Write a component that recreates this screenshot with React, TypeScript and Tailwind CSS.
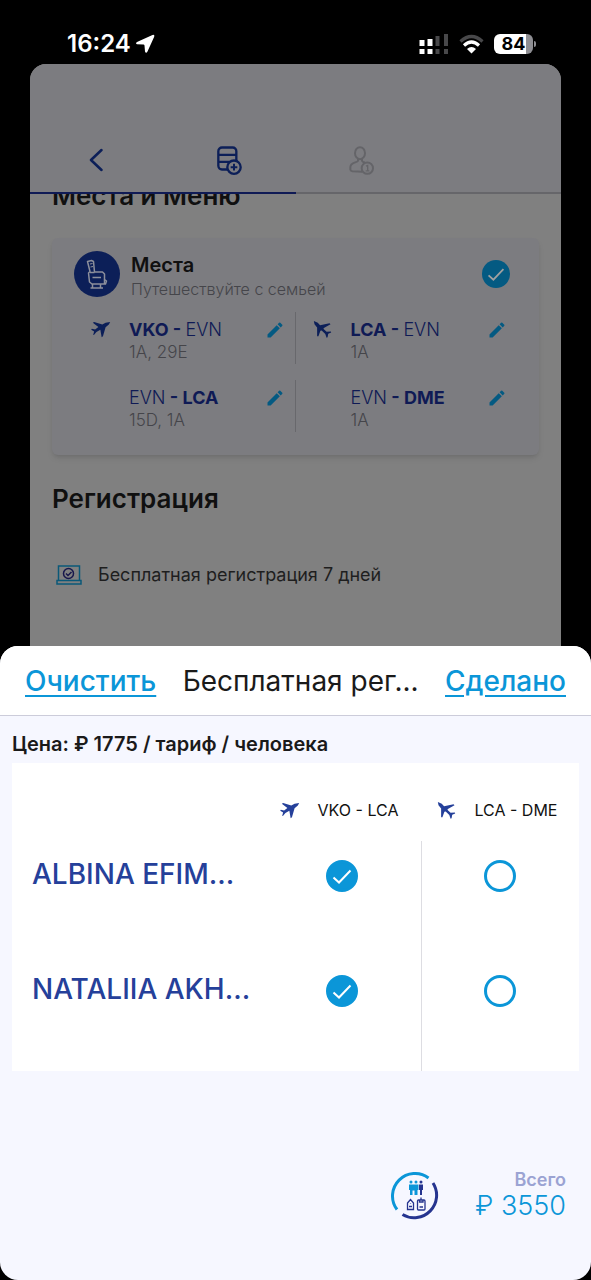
import React, { useState } from 'react';
import { MdEdit } from 'react-icons/md';

interface Segment {
  from: string;
  to: string;
  bold: 'from' | 'to';
  seats: string;
  plane?: 'out' | 'back';
}

const segments: Segment[] = [
  { from: 'VKO', to: 'EVN', bold: 'from', seats: '1A, 29E', plane: 'out' },
  { from: 'LCA', to: 'EVN', bold: 'from', seats: '1A', plane: 'back' },
  { from: 'EVN', to: 'LCA', bold: 'to', seats: '15D, 1A' },
  { from: 'EVN', to: 'DME', bold: 'to', seats: '1A' },
];

const passengers = ['ALBINA EFIM...', 'NATALIIA AKH...'];

const flights: { label: string; plane: 'out' | 'back' }[] = [
  { label: 'VKO - LCA', plane: 'out' },
  { label: 'LCA - DME', plane: 'back' },
];

const PlaneIcon: React.FC<{ direction: 'out' | 'back' }> = ({ direction }) => (
  <svg viewBox="0 0 60 52" className="h-[17px] w-5 shrink-0" fill="currentColor" aria-hidden="true">
    {direction === 'out' ? (
      <path d="M58 3 44 5 34 11 9 3 5 5 22 18 12 26 2 24 0 27 9 32 6 43 9 42 16 34 28 27 32 50 36 47 44 19 54 11Z" />
    ) : (
      <path d="M2 0 14 5 21 13 50 7 53 10 34 21 31 24 41 33 54 32 55 35 46 39 44 50 41 51 37 40 26 29 22 30 16 47 12 47 12 20 4 10Z" />
    )}
  </svg>
);

const CheckMark: React.FC<{ className: string }> = ({ className }) => (
  <svg viewBox="0 0 32 32" className={className} fill="none" stroke="currentColor" strokeWidth={2} aria-hidden="true">
    <path d="M7.500 17.500 13 22.500 24.500 10.500" />
  </svg>
);

const SeatIcon = () => (
  <svg viewBox="0 0 46 46" className="mt-[13px] size-[46px] shrink-0" fill="none" stroke="#8c8f9b" aria-hidden="true">
    <circle cx="23" cy="23" r="23" fill="#0c1f58" stroke="none" />
    <path strokeWidth="1.500" strokeLinejoin="round" d="M13.500 10.500 17.500 9.500 19.500 10.500 20.500 21H28.500L30.500 23V28.500L32.500 30 31.500 33H18L15.500 31 14.500 22 16 20.500Z" />
    <path strokeWidth="1.500" d="M16 21.500H20.500M18.500 26.500H27M18.500 33V36.500M26.500 33V36.500M16.500 37H29M30.500 28.500V33" />
    <path strokeWidth="1" d="M16 13 18.500 12.500M16.500 16 19 15.500" />
  </svg>
);

const ServicesIcon = () => (
  <svg viewBox="0 0 75 86" className="h-[29px] w-[25px]" fill="none" stroke="#0c1f58" strokeWidth="7" aria-hidden="true">
    <rect x="4" y="4" width="54" height="66" rx="11" />
    <path d="M4 26H58M4 47H58" />
    <circle cx="51" cy="63" r="20" fill="#7c7c80" />
    <path strokeWidth="6" d="M51 53V73M41 63H61" />
  </svg>
);

const PassengerIcon = () => (
  <svg viewBox="0 0 75 86" className="h-[29px] w-[25px]" fill="none" stroke="#646468" strokeWidth="6" aria-hidden="true">
    <ellipse cx="33" cy="21" rx="15" ry="18" />
    <path d="M27 38V44C24 50 4 48 4 63V70Q4 74 10 75L40 77M39 38V44Q41 48 48 49" />
    <circle cx="55" cy="66" r="17" fill="#7c7c80" />
    <path strokeWidth="4" d="M51 60 56 58V74M50 74H61" />
  </svg>
);

const LaptopIcon = () => (
  <svg viewBox="0 0 26 20" className="h-5 w-[26px] shrink-0" fill="none" aria-hidden="true">
    <path stroke="#0a5878" strokeWidth="1.500" d="M2.500 15V1H23.500V15M1 15.500H25V19H1Z" />
    <circle cx="12.500" cy="8.500" r="5" stroke="#17174c" strokeWidth="1.500" />
    <path stroke="#17174c" strokeWidth="1.500" d="M10 8.500 12 10.500 15.500 7" />
  </svg>
);

const BasketIcon = () => (
  <svg viewBox="0 0 48 48" className="size-12" fill="none" aria-hidden="true">
    <path stroke="#0b96d8" strokeWidth="3" d="M6 37.500A22.500 22.500 0 0 1 37.500 6" />
    <path stroke="#25348f" strokeWidth="3" d="M42 11A22.500 22.500 0 0 1 11.500 42.500" />
    <g fill="#0b96d8">
      <circle cx="20" cy="10" r="1.500" />
      <circle cx="25" cy="10" r="1.500" />
      <path d="M18 12.500H27.500V18H26.500V23H23.500V18.500H21.500V23H19V18H18Z" />
    </g>
    <g fill="#25348f">
      <circle cx="30" cy="10" r="1.500" />
      <path d="M28 12.500H32V18H31V23H29V18H28Z" />
    </g>
    <g stroke="#25348f" strokeWidth="1.300">
      <path d="M16.500 31 19.500 27.500 22.500 31V37.500H16.500ZM18 34.500H21M19.500 31V31.500" />
      <rect x="26.500" y="28" width="7.500" height="10" rx="1" />
      <path d="M28.500 28V30H32V28M30 28V25.500M28.500 35H32" />
    </g>
  </svg>
);

const StatusBar = () => (
  <div className="flex h-16 items-center justify-between bg-black pt-6 pr-[55px] pl-[67px] text-white">
    <div className="flex items-center gap-1">
      <span className="text-2xl font-semibold">16:24</span>
      <svg viewBox="0 0 20 20" className="size-5" fill="currentColor" aria-hidden="true">
        <path d="M17.500 1Q20 0.300 19.200 2.800L12.500 17.500Q11 20 10 17.500L9.500 11.500Q9.300 10.700 8.500 10.600L2 10.200Q0 9.500 2 8Z" />
      </svg>
    </div>
    <div className="flex items-center gap-[10px]">
      <svg viewBox="0 0 30 20" className="h-5 w-[30px]" fill="currentColor" aria-hidden="true">
        <path d="M0.500 6h5v6h-5zM0.500 15h5v5h-5zM8.500 5h5v7h-5zM8.500 15h5v5h-5z" />
        <path fill="#48484a" d="M16.500 2h4v10h-4zM16.500 15h4v5h-4zM25 0h4v12h-4zM25 15h4v5h-4z" />
      </svg>
      <svg viewBox="0 0 25 20" className="h-5 w-[25px]" fill="none" stroke="currentColor" strokeWidth="3.200" aria-hidden="true">
        <path stroke="#48484a" d="M1.500 7.500Q12.500-2.500 23.500 7.500" />
        <path d="M5 11.500Q12.500 4.500 20 11.500" />
        <path fill="currentColor" stroke="none" d="M8 15Q12.500 11 17 15L12.500 19.500Z" />
      </svg>
      <div className="flex items-center gap-px">
        <div className="flex h-5 w-[39px] items-center justify-center rounded-md bg-linear-to-r from-white from-82% to-[#8e8e93] to-82% text-lg leading-5 font-bold text-black">
          84
        </div>
        <div className="h-[6px] w-[2px] rounded-r bg-[#8e8e93]" />
      </div>
    </div>
  </div>
);

const SegmentCell: React.FC<{ segment: Segment; divided: boolean }> = ({ segment, divided }) => (
  <div className={divided ? 'flex border-r border-[#68686c] pr-[10px] pl-[17px]' : 'flex pr-[10px] pl-[17px]'}>
    <div className="w-[38px] pt-[9px] text-[#0c1f58]">{segment.plane && <PlaneIcon direction={segment.plane} />}</div>
    <div className="flex-1 pt-[6px]">
      <p className="text-lg leading-[23px] text-[#0f1a55]">
        <span className={segment.bold === 'from' ? 'font-bold' : 'font-light'}>{segment.from}</span>
        <span className="font-bold"> - </span>
        <span className={segment.bold === 'to' ? 'font-bold' : 'font-light'}>{segment.to}</span>
      </p>
      <p className="text-[17px] leading-[23px] font-light text-[#45454a]">{segment.seats}</p>
    </div>
    <button className="self-start pt-2 text-[#045a82]" aria-label={`${segment.from} - ${segment.to}`}>
      <MdEdit size={20} />
    </button>
  </div>
);

const BookingPage = () => (
  <main className="mx-[30px] rounded-t-2xl bg-[#808080] pb-[59px]">
    <nav className="rounded-t-2xl bg-[#7c7c80]">
      <div className="grid h-32 grid-cols-4 justify-items-center pt-16">
        <button aria-label="Назад">
          <svg viewBox="0 0 14 24" className="h-6 w-[14px]" fill="none" stroke="#0c1f58" strokeWidth="2.500" aria-hidden="true">
            <path strokeLinecap="round" strokeLinejoin="round" d="M12.500 2 2 12 12.500 22" />
          </svg>
        </button>
        <button aria-label="Услуги">
          <ServicesIcon />
        </button>
        <button aria-label="Пассажиры">
          <PassengerIcon />
        </button>
      </div>
      <div className="h-[2px] bg-[#66666a]">
        <div className="h-full w-1/2 bg-[#0f1a55]" />
      </div>
    </nav>

    <div className="px-[22px]">
      {/* scrolled under the tab bar */}
      <div className="flex h-[18px] items-end overflow-hidden">
        <h2 className="text-[26px] leading-8 font-semibold text-[#101010]">Места и Меню</h2>
      </div>

      <section className="mt-[26px] rounded-md bg-[#7c7c80] px-[22px] pb-[23px] shadow-md">
        <div className="flex h-[74px] items-start">
          <SeatIcon />
          <div className="flex-1 pt-[15px] pl-[11px]">
            <h3 className="text-xl leading-6 font-semibold text-[#101010]">Места</h3>
            <p className="text-base leading-6 font-light text-[#45454a]">Путешествуйте с семьей</p>
          </div>
          <div className="mt-[22px] mr-[7px] grid size-7 place-items-center rounded-full bg-[#045a82] text-[#a0a0a0]">
            <CheckMark className="size-7" />
          </div>
        </div>
        <div className="grid grid-cols-2 gap-y-4">
          {segments.map((segment, i) => (
            <SegmentCell key={segment.from + segment.to} segment={segment} divided={i % 2 === 0} />
          ))}
        </div>
      </section>

      <h2 className="mt-7 text-[26px] leading-8 font-semibold text-[#101010]">Регистрация</h2>
      <div className="mt-12 flex items-center gap-4 pl-1">
        <LaptopIcon />
        <p className="text-lg leading-6 text-[#1e1e1e]">Бесплатная регистрация 7 дней</p>
      </div>
    </div>
  </main>
);

const RegistrationSheet = () => {
  const [selected, setSelected] = useState<string[]>(['0-0', '1-0']);

  const toggle = (id: string) =>
    setSelected((prev) => (prev.includes(id) ? prev.filter((s) => s !== id) : [...prev, id]));

  return (
    <section className="flex flex-1 flex-col overflow-hidden rounded-[18px] bg-[#f6f7ff]">
      <header className="flex h-[70px] items-center justify-between border-b border-[#ccccda] bg-white px-[25px] text-[28px] whitespace-nowrap">
        <button onClick={() => setSelected([])} className="font-medium text-[#0b96d8] underline decoration-2 underline-offset-4">
          Очистить
        </button>
        <h1 className="text-[#1a1a1a]">Бесплатная рег...</h1>
        <button className="font-medium text-[#0b96d8] underline decoration-2 underline-offset-4">Сделано</button>
      </header>

      <div className="px-3">
        <p className="pt-4 pb-[7px] text-xl leading-6 font-semibold text-[#1a1a1a]">Цена: ₽ 1775 / тариф / человека</p>
        <table className="w-full table-fixed bg-white">
          <thead>
            <tr className="h-[78px]">
              <td />
              {flights.map((flight) => (
                <th key={flight.label} scope="col" className="w-[158px] pt-4 pr-[6px] font-normal">
                  <div className="flex items-center justify-center gap-[18px] text-base text-[#111111]">
                    <span className="text-[#25409a]">
                      <PlaneIcon direction={flight.plane} />
                    </span>
                    {flight.label}
                  </div>
                </th>
              ))}
            </tr>
          </thead>
          <tbody>
            {passengers.map((name, row) => (
              <tr key={name} className="h-[115px] align-top">
                <th scope="row" className="pt-[17px] pl-5 text-left text-[28px] leading-8 font-medium whitespace-nowrap text-[#25409a]">
                  {name}
                </th>
                {flights.map((flight, col) => {
                  const id = `${row}-${col}`;
                  return (
                    <td key={id} className={col === 0 ? 'border-r border-[#dddde2] pt-[19px]' : 'pt-[19px]'}>
                      <label className="mx-auto grid size-8 place-items-center">
                        <input
                          type="checkbox"
                          checked={selected.includes(id)}
                          onChange={() => toggle(id)}
                          aria-label={`${name} ${flight.label}`}
                          className="peer col-start-1 row-start-1 size-8 appearance-none rounded-full border-3 border-[#0b96d8] checked:bg-[#0b96d8]"
                        />
                        <CheckMark className="pointer-events-none col-start-1 row-start-1 hidden size-8 text-white peer-checked:block" />
                      </label>
                    </td>
                  );
                })}
              </tr>
            ))}
          </tbody>
        </table>
      </div>

      <footer className="mt-auto flex items-center justify-end gap-9 pr-[25px] pb-[58px]">
        <BasketIcon />
        <div className="text-right">
          <p className="text-lg leading-5 font-semibold text-[#9ba3d3]">Всего</p>
          <p className="text-[27px] leading-8 font-light text-[#0b96d8]">₽ 3550</p>
        </div>
      </footer>
    </section>
  );
};

const App: React.FC = () => (
  <div className="flex min-h-screen flex-col bg-black font-[Inter,'Noto_Sans',sans-serif]">
    <StatusBar />
    <BookingPage />
    <RegistrationSheet />
  </div>
);

export default App;
